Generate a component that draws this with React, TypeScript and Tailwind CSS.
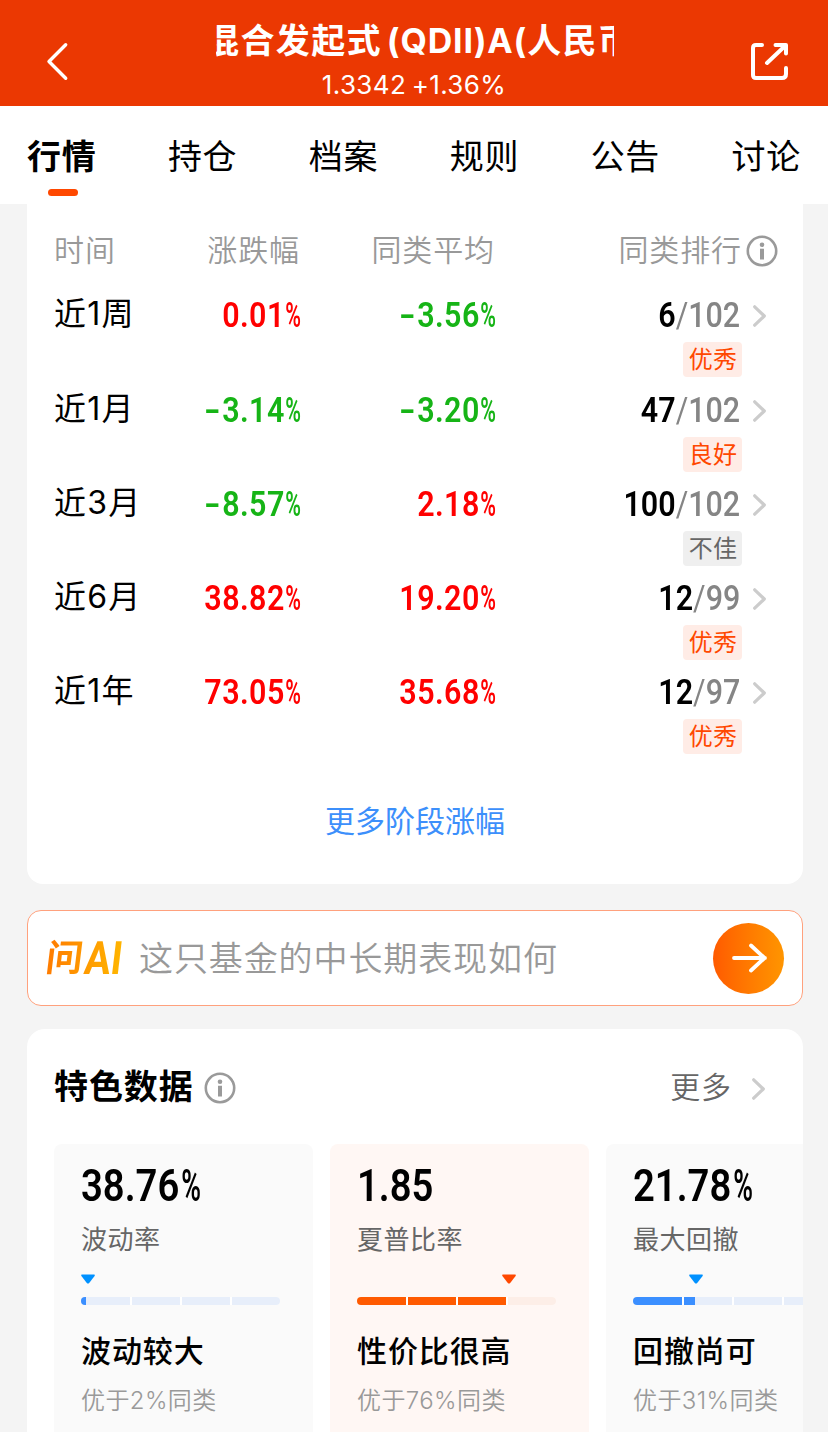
import React from 'react';

const tabs = ['行情', '持仓', '档案', '规则', '公告', '讨论'];

const periods = [
  { name: '近1周', change: '0.01', average: '-3.56', rank: '6', total: '102', level: '优秀' },
  { name: '近1月', change: '-3.14', average: '-3.20', rank: '47', total: '102', level: '良好' },
  { name: '近3月', change: '-8.57', average: '2.18', rank: '100', total: '102', level: '不佳' },
  { name: '近6月', change: '38.82', average: '19.20', rank: '12', total: '99', level: '优秀' },
  { name: '近1年', change: '73.05', average: '35.68', rank: '12', total: '97', level: '优秀' },
];

const features = [
  { value: '38.76', percent: true, label: '波动率', fill: 5, marker: 7, title: '波动较大', note: '优于2%同类', hot: false },
  { value: '1.85', percent: false, label: '夏普比率', fill: 149, marker: 152, title: '性价比很高', note: '优于76%同类', hot: true },
  { value: '21.78', percent: true, label: '最大回撤', fill: 62, marker: 63, title: '回撤尚可', note: '优于31%同类', hot: false },
];

// left edge and width of each bar segment
const segments = [
  [0, 49],
  [51, 48],
  [101, 48],
  [151, 48],
];

const InfoIcon = () => (
  <svg className="w-8 h-8 flex-none" viewBox="0 0 32 32" fill="none">
    <circle cx="16" cy="16" r="14.2" stroke="#9a9a9a" strokeWidth="2.6" />
    <circle cx="16" cy="9.8" r="2.3" fill="#9a9a9a" />
    <path d="M16 13.7v10.8" stroke="#9a9a9a" strokeWidth="4" />
  </svg>
);

const Chevron = () => (
  <svg className="w-[15px] h-[24px] flex-none" viewBox="0 0 15 24" fill="none">
    <path d="M2.7 2.8l9.6 9.2-9.6 9.2" stroke="#cccccc" strokeWidth="3.2" strokeLinecap="round" strokeLinejoin="round" />
  </svg>
);

const Percent = () => (
  <span className="inline-block w-[0.5em]">
    <span className="inline-block origin-left scale-x-[0.7] font-semibold">%</span>
  </span>
);

const Rate = ({ value }: { value: string }) => {
  const down = value.startsWith('-');
  return (
    <div
      className={`mt-px origin-right scale-x-[0.87] text-right font-[Roboto] text-[35px] leading-[40px] font-semibold whitespace-nowrap ${
        down ? 'text-[#16b416]' : 'text-[#ff0000]'
      }`}
    >
      {down && <span className="inline-block mr-[2px] origin-right scale-x-150">-</span>}
      <span className="tracking-[0.5px]">{value.replace('-', '')}</span>
      <Percent />
    </div>
  );
};

const FeatureCard = ({ item }: { item: (typeof features)[number] }) => (
  <div className={`flex-none w-[259px] h-[320px] rounded-[8px] pl-[27px] ${item.hot ? 'bg-[#fff7f4]' : 'bg-[#fafafa]'}`}>
    <div className="mt-[16px] origin-left scale-x-[0.85] font-[Roboto] text-[45px] leading-[52px] font-semibold text-black whitespace-nowrap">
      {item.value}
      {item.percent && (
        <span className="ml-[2px]">
          <Percent />
        </span>
      )}
    </div>
    <div className="mt-[10px] text-[26px] leading-[36px] tracking-[0.5px] text-[#666666]">{item.label}</div>
    <div className="mt-[16px] h-[10px]">
      <svg className="block w-[14px] h-[10px]" style={{ marginLeft: item.marker - 7 }} viewBox="0 0 14 10">
        <path d="M0.8 0.5h12.4q1 0.4 0.4 1.4L8.2 9q-1.2 1-2.4 0L0.4 1.9Q-0.2 0.9 0.8 0.5z" fill={item.hot ? '#ff4800' : '#0091ff'} />
      </svg>
    </div>
    <div className="mt-[13px] flex w-[199px] h-[8px] gap-[2px] rounded-full overflow-hidden bg-white">
      {segments.map(([start, width]) => (
        <div key={start} className={`h-full ${item.hot ? 'bg-[#fdeee7]' : 'bg-[#e7eefa]'}`} style={{ width }}>
          <div
            className={`h-full ${item.hot ? 'bg-[#ff5a00]' : 'bg-[#3b8fff]'}`}
            style={{ width: Math.max(0, Math.min(width, item.fill - start)) }}
          />
        </div>
      ))}
    </div>
    <div className="mt-[26px] text-[30px] leading-[40px] tracking-[0.9px] font-medium text-black">{item.title}</div>
    <div className="mt-[14px] text-[24px] leading-[32px] tracking-[0.4px] font-[350] text-[#999999]">{item.note}</div>
  </div>
);

const App = () => {
  return (
    <div className="w-[828px] h-[1432px] overflow-hidden bg-[#f4f4f4] font-[Inter,'Noto_Sans_CJK_SC',sans-serif] text-black">
      <header className="flex items-start h-[106px] bg-[#eb3802] text-white">
        <svg className="ml-[44px] mt-[40px] w-[28px] h-[44px]" viewBox="0 0 28 44" fill="none">
          <path d="M21.7 4.7L5 21.5l16.7 16.8" stroke="white" strokeWidth="3.4" strokeLinecap="round" strokeLinejoin="round" />
        </svg>
        <div className="ml-[144px] w-[398px] flex flex-col items-center">
          <div className="mt-[19px] w-full overflow-hidden">
            <div className="-ml-[11px] text-[34px] leading-[44px] tracking-[1.4px] font-bold whitespace-nowrap">
              混合发起式<span className="tracking-[0.8px] [word-spacing:-4px]"> (QDII)A(</span>人民币
            </div>
          </div>
          <div className="-ml-[2px] mt-[6px] text-[26px] leading-[32px] tracking-[0.35px] [word-spacing:-2px] whitespace-nowrap">1.3342 +1.36%</div>
        </div>
        <svg className="ml-auto mr-[39px] mt-[41px] w-[40px] h-[40px]" viewBox="0 0 40 40" fill="none">
          <path
            d="M13 4H7q-3 0-3 3v27q0 3 3 3h26q4 0 4-4v-6M26.5 4H37v8.5M36.5 4.5L18 22"
            stroke="white"
            strokeWidth="4"
            strokeLinecap="round"
            strokeLinejoin="round"
          />
        </svg>
      </header>

      <nav className="flex justify-between h-[98px] px-[27px] pt-[29px] bg-white">
        {tabs.map((tab, index) => (
          <div key={tab} className="flex flex-col items-center">
            <span className={`text-[34px] leading-[44px] tracking-[0.7px] ${index === 0 ? 'font-bold' : 'font-normal'}`}>{tab}</span>
            {index === 0 && <span className="ml-[2px] mt-[10px] w-[30px] h-[7px] rounded-full bg-[#ff4800]" />}
          </div>
        ))}
      </nav>

      <main className="px-[27px] pr-[25px]">
        {/* Period returns */}
        <section className="h-[680px] w-[776px] rounded-b-[16px] bg-white pl-[28px]">
          <div className="grid grid-cols-[50px_195px_195px_247px_1fr] items-center h-[91px] pt-px text-[30px] tracking-[0.9px] font-[350] text-[#999999]">
            <span className="-ml-[1px] whitespace-nowrap">时间</span>
            <span className="text-right">涨跌幅</span>
            <span className="text-right">同类平均</span>
            <span className="text-right">同类排行</span>
            <span className="ml-[4px] mt-[2px]">
              <InfoIcon />
            </span>
          </div>
          {periods.map((period, index) => (
            <div
              key={period.name}
              className={`grid grid-cols-[245px_195px_245px_1fr] items-start ${index === 0 ? 'h-[95px]' : 'h-[94px]'}`}
            >
              <div className="col-start-1 row-start-1 -ml-[1px] -mt-px text-[32px] leading-[40px] tracking-[1.2px] font-[370]">{period.name}</div>
              <div className="col-start-1 row-start-1">
                <Rate value={period.change} />
              </div>
              <Rate value={period.average} />
              <div className="flex flex-col items-end">
                <div className="mt-px origin-right scale-x-[0.87] font-[Roboto] text-[35px] leading-[40px] font-semibold whitespace-nowrap">
                  {period.rank}
                  <span className="font-medium text-[#858585]">
                    <span className="font-normal">/</span>
                    {period.total}
                  </span>
                </div>
                <span
                  className={`-mr-[2px] mt-[6px] flex items-center justify-center w-[59px] h-[35px] pt-px pl-px rounded-[4px] text-[24px] tracking-[0.3px] ${
                    period.level === '不佳' ? 'bg-[#efefef] text-[#666666]' : 'bg-[#ffece6] text-[#ff4800]'
                  }`}
                >
                  {period.level}
                </span>
              </div>
              <div className="mt-[9px] ml-[12px]">
                <Chevron />
              </div>
            </div>
          ))}
          <div className="mt-[35px] -ml-[28px] text-center text-[30px] leading-[40px] text-[#3c8ffb]">更多阶段涨幅</div>
        </section>

        {/* AI question */}
        <section className="mt-[26px] flex items-center w-[776px] h-[96px] rounded-[14px] border border-[#ffa17d] bg-white pl-[18px] pr-[18px]">
          <div className="flex items-center w-[93px] h-[44px] font-bold whitespace-nowrap">
            <span className="w-[39px] -skew-x-[7deg] bg-linear-to-r from-[#ff7a00] to-[#ff9900] bg-clip-text text-transparent text-[37px] leading-[44px]">
              问
            </span>
            <span className="inline-block w-[48px] origin-left scale-x-[0.85] -skew-x-[8deg] bg-linear-to-r from-[#ff9900] to-[#ffb800] bg-clip-text text-transparent font-[Roboto] text-[46px] leading-[44px]">
              AI
            </span>
          </div>
          <div className="flex-1 mt-px text-[34px] leading-[44px] tracking-[0.9px] font-[350] text-[#999999]">这只基金的中长期表现如何</div>
          <div className="flex items-center justify-center w-[71px] h-[71px] rounded-full bg-linear-to-r from-[#ff5a00] to-[#ff9500]">
            <svg className="w-[36px] h-[32px]" viewBox="0 0 36 32" fill="none">
              <path d="M3 16h31M20 3.5L33.5 16 20 28.5" stroke="white" strokeWidth="3.8" strokeLinecap="round" strokeLinejoin="round" />
            </svg>
          </div>
        </section>

        {/* Feature data */}
        <section className="mt-[23px] w-[776px] h-[420px] rounded-[18px] bg-white overflow-hidden pl-[27px]">
          <div className="flex items-center h-[115px]">
            <h2 className="mt-px text-[34px] leading-[44px] tracking-[0.9px] font-bold">特色数据</h2>
            <span className="ml-[10px] mt-[2px]">
              <InfoIcon />
            </span>
            <span className="ml-auto text-[30px] leading-[40px] tracking-[0.9px] font-[350] text-[#666666]">更多</span>
            <span className="ml-[19px] mr-[37px] mt-[5px]">
              <Chevron />
            </span>
          </div>
          <div className="flex gap-[17px]">
            {features.map((item) => (
              <FeatureCard key={item.label} item={item} />
            ))}
          </div>
        </section>
      </main>
    </div>
  );
};

export default App;
